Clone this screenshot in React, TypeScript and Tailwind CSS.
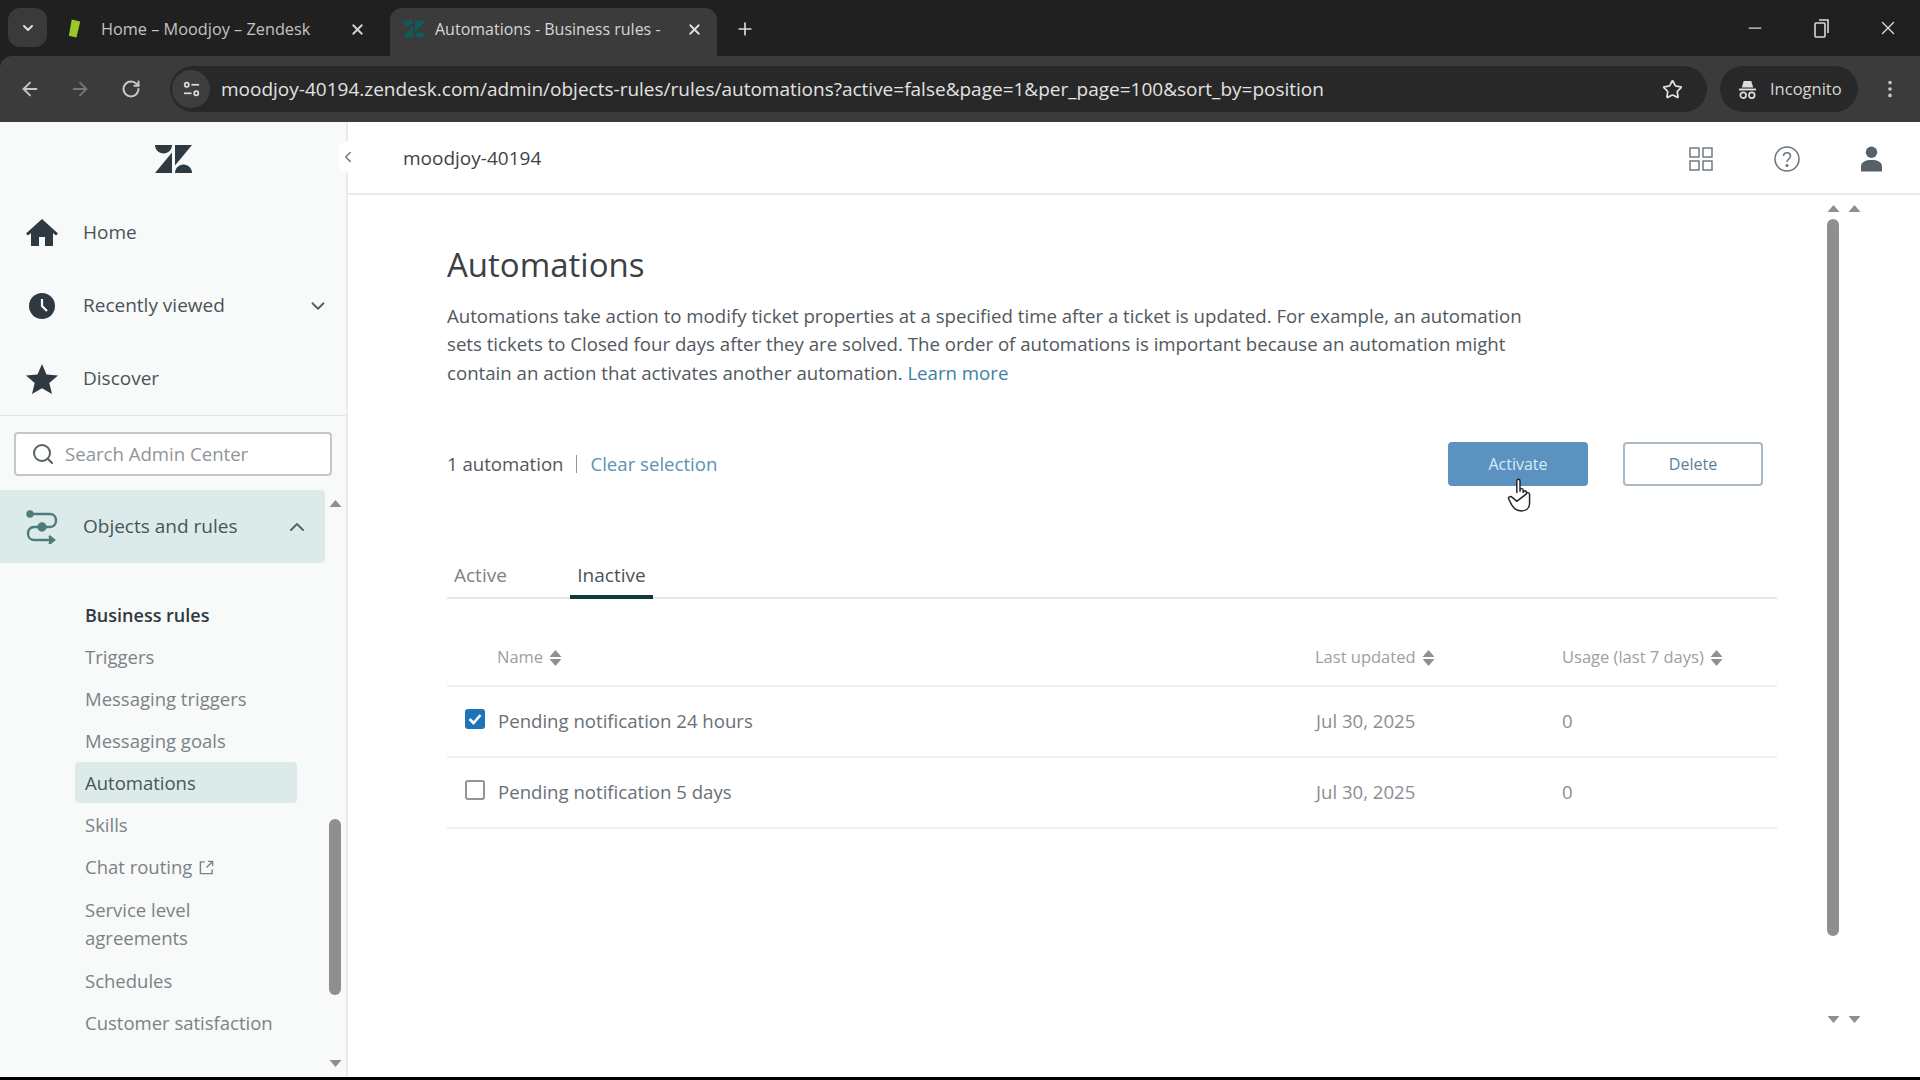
import {
  ArrowLeft,
  ArrowRight,
  ChevronDown,
  ChevronLeft,
  ChevronUp,
  EllipsisVertical,
  Minus,
  Plus,
  RotateCw,
  Search,
  Star,
  X,
} from 'lucide-react';

function ZendeskLogo({ className, fill }: { className?: string; fill: string }) {
  return (
    <svg viewBox="0 0 37 28" className={className} fill={fill}>
      <path d="M17 7.5V28H0L17 7.5Z" />
      <path d="M17 0C17 4.7 13.2 8.5 8.5 8.5S0 4.7 0 0H17Z" />
      <path d="M20 28C20 23.3 23.8 19.5 28.5 19.5S37 23.3 37 28H20Z" />
      <path d="M20 20.5V0H37L20 20.5Z" />
    </svg>
  );
}

function Triangle({ up, className }: { up?: boolean; className?: string }) {
  return (
    <svg viewBox="0 0 12 7" className={className} fill="currentColor">
      {up ? <path d="M6 0L12 7H0L6 0Z" /> : <path d="M6 7L0 0H12L6 7Z" />}
    </svg>
  );
}

function SortIcon() {
  return (
    <svg viewBox="0 0 12 16" className="w-[13px] h-[16px] text-[#8c9196]" fill="currentColor">
      <path d="M6 0L12 7H0L6 0Z" />
      <path d="M6 16L0 9H12L6 16Z" />
    </svg>
  );
}

function BrowserTabs() {
  return (
    <div className="h-14 bg-[#202020] flex items-end pl-2 text-[#c9c9c9] shrink-0">
      <div className="w-[39px] h-[39px] mb-[9px] rounded-xl bg-[#3a3a3a] flex items-center justify-center">
        <ChevronDown size={16} strokeWidth={3} className="text-[#dddddd]" />
      </div>
      <div className="w-[343px] h-12 flex items-center pl-[19px] pr-[24px] pb-[6px]">
        <svg viewBox="0 0 20 22" className="w-[19px] h-[22px] shrink-0">
          <path d="M6 1L15 3L11 20L3 18Z" fill="#9bc72b" />
        </svg>
        <span className="ml-4 text-[16.3px] text-[#c4c4c4] whitespace-nowrap flex-1">Home – Moodjoy – Zendesk</span>
        <X size={17} strokeWidth={2.5} className="text-[#d6d6d6]" />
      </div>
      <div className="w-[327px] h-12 bg-[#3b3b3b] rounded-t-xl flex items-center pl-[13px] pr-[14px] pb-[6px]">
        <ZendeskLogo className="w-[22px] h-[18px] shrink-0" fill="#0d5c58" />
        <span className="ml-[10px] text-[16px] text-[#d6d6d6] whitespace-nowrap">Automations - Business rules -</span>
        <span className="flex-1" />
        <X size={17} strokeWidth={2.5} className="text-[#e0e0e0]" />
      </div>
      <div className="ml-[18px] mb-[17px]">
        <Plus size={20} strokeWidth={2} className="text-[#dcdcdc]" />
      </div>
      <div className="flex-1" />
      <div className="flex items-center gap-[47px] pr-[21px] mb-[17px] text-[#d8d8d8]">
        <Minus size={20} strokeWidth={1.5} />
        <svg viewBox="0 0 16 20" className="w-[16px] h-[20px] ml-[2px]" fill="none" stroke="currentColor" strokeWidth="1.6">
          <rect x="1" y="5" width="10" height="14" rx="1" />
          <path d="M5 2H14V15" />
        </svg>
        <X size={22} strokeWidth={1.5} />
      </div>
    </div>
  );
}

function BrowserToolbar() {
  return (
    <div className="h-[66px] bg-[#3b3b3b] rounded-tl-xl flex items-center shrink-0 text-[#d0d0d0]">
      <div className="w-[170px] flex items-center pl-[19px] gap-[28px]">
        <ArrowLeft size={22} className="text-[#c8c8c8]" />
        <ArrowRight size={22} className="text-[#777777]" />
        <RotateCw size={20} strokeWidth={2.4} className="text-[#c8c8c8] ml-[2px]" />
      </div>
      <div className="w-[1537px] h-[46px] rounded-full bg-[#282828] flex items-center">
        <div className="w-[38px] h-[38px] ml-[2px] rounded-full bg-[#3e3e3e] flex items-center justify-center">
          <svg viewBox="0 0 20 20" className="w-[19px] h-[19px]" fill="none" stroke="#dddddd" strokeWidth="1.8">
            <circle cx="5" cy="5" r="2.2" />
            <path d="M10 5H18" />
            <path d="M2 14H10" />
            <circle cx="15" cy="14" r="2.2" />
          </svg>
        </div>
        <span className="ml-[11px] text-[19px] text-[#e2e2e2] whitespace-nowrap flex-1">
          moodjoy-40194.zendesk.com/admin/objects-rules/rules/automations?active=false&amp;page=1&amp;per_page=100&amp;sort_by=position
        </span>
        <Star size={21} strokeWidth={2} className="text-[#dedede] mr-[24px]" />
      </div>
      <div className="w-[138px] h-[46px] ml-[13px] rounded-full bg-[#282828] flex items-center pl-[18px]">
        <svg viewBox="0 0 20 22" className="w-[19px] h-[21px]" fill="#dcdcdc">
          <path d="M6 2H14L16 9H4Z" />
          <rect x="1" y="10" width="18" height="2" />
          <circle cx="5.5" cy="17" r="3" fill="none" stroke="#dcdcdc" strokeWidth="1.8" />
          <circle cx="14.5" cy="17" r="3" fill="none" stroke="#dcdcdc" strokeWidth="1.8" />
        </svg>
        <span className="ml-[13px] text-[16.5px] text-[#d6d6d6]">Incognito</span>
      </div>
      <EllipsisVertical size={22} className="ml-[21px] text-[#c8c8c8]" />
    </div>
  );
}

function NavRow({ icon, label, chevron }: { icon: React.ReactNode; label: string; chevron?: boolean }) {
  return (
    <div className="h-[73px] flex items-center relative">
      <div className="w-[83px] flex justify-center">{icon}</div>
      <span className="text-[19px] font-medium text-[#4a5358]">{label}</span>
      {chevron && <ChevronDown size={22} className="absolute left-[307px] text-[#555f64]" />}
    </div>
  );
}

const subItems = ['Triggers', 'Messaging triggers', 'Messaging goals'];

function Sidebar() {
  return (
    <aside className="w-[348px] shrink-0 bg-[#f8f9f9] border-r-2 border-[#e9ebed] flex flex-col relative">
      <div className="h-[74px] flex items-center justify-center">
        <ZendeskLogo className="w-[37px] h-[28px]" fill="#2f3941" />
      </div>
      <NavRow
        label="Home"
        icon={
          <svg viewBox="0 0 32 28" className="w-[32px] h-[28px]" fill="#2f3941">
            <path d="M16 0L32 14.5L30 16.5L27 14V27H19V18H13V27H5V14L2 16.5L0 14.5Z" />
          </svg>
        }
      />
      <NavRow
        label="Recently viewed"
        chevron
        icon={
          <svg viewBox="0 0 26 26" className="w-[26px] h-[26px]">
            <circle cx="13" cy="13" r="13" fill="#2f3941" />
            <path d="M13 6V13L18 18" fill="none" stroke="#f8f9f9" strokeWidth="2.2" />
          </svg>
        }
      />
      <NavRow
        label="Discover"
        icon={
          <svg viewBox="0 0 32 30" className="w-[32px] h-[30px]" fill="#2f3941">
            <path d="M16 0L20.5 10.5L32 11.5L23.3 19L26 30L16 24.2L6 30L8.7 19L0 11.5L11.5 10.5Z" />
          </svg>
        }
      />
      <div className="border-t border-[#e3e5e7] px-[14px] pt-[16px] pb-[14px]">
        <div className="h-[44px] rounded border-2 border-[#c4c7ca] bg-white flex items-center pl-[15px]">
          <Search size={24} strokeWidth={2} className="text-[#555f64]" />
          <span className="ml-[10px] text-[18.6px] text-[#8f9599]">Search Admin Center</span>
        </div>
      </div>
      <div className="flex-1 flex min-h-0">
        <div className="w-[325px] shrink-0">
          <div className="h-[73px] bg-[#dcebea] rounded-r flex items-center relative">
            <div className="w-[83px] flex justify-center">
              <svg viewBox="0 0 32 34" className="w-[32px] h-[34px]" fill="none" stroke="#4e7c7a" strokeWidth="2.4">
                <circle cx="4" cy="4" r="2.5" fill="#4e7c7a" />
                <path d="M6 4H24C32 4 32 17 24 17H8C0 17 0 30 8 30H27" />
                <path d="M23 26L28 30L23 34" fill="#4e7c7a" />
                <circle cx="16" cy="17" r="3.5" fill="#4e7c7a" />
              </svg>
            </div>
            <span className="text-[19px] font-medium text-[#44575a]">Objects and rules</span>
            <ChevronUp size={24} className="absolute left-[285px] text-[#4e6a6c]" />
          </div>
          <div className="pl-[75px] pr-[28px] pt-[32px]">
            <div className="h-[41px] pl-[10px] flex items-center text-[18px] font-semibold text-[#2f3941]">
              Business rules
            </div>
            {subItems.map((s) => (
              <div key={s} className="h-[42px] pl-[10px] flex items-center text-[18.5px] text-[#7b8287]">
                {s}
              </div>
            ))}
            <div className="h-[41px] pl-[10px] rounded flex items-center text-[18.5px] text-[#46575c] bg-[#dcebea]">
              Automations
            </div>
            <div className="h-[43px] pl-[10px] flex items-center text-[18.5px] text-[#7b8287]">Skills</div>
            <div className="h-[42px] pl-[10px] flex items-center text-[18.5px] text-[#7b8287]">
              Chat routing
              <svg viewBox="0 0 16 16" className="w-[15px] h-[15px] ml-[7px]" fill="none" stroke="#7b8287" strokeWidth="1.5">
                <path d="M6 2H1.5V14.5H14V10" />
                <path d="M8 8L14.5 1.5M9.5 1.5H14.5V6.5" />
              </svg>
            </div>
            <div className="py-[8px] pl-[10px] text-[18.5px] leading-[28px] text-[#7b8287]">
              Service level
              <br />
              agreements
            </div>
            <div className="h-[42px] pl-[10px] flex items-center text-[18.5px] text-[#7b8287]">Schedules</div>
            <div className="h-[42px] pl-[10px] flex items-center text-[18.5px] text-[#7b8287] whitespace-nowrap">
              Customer satisfaction
            </div>
          </div>
        </div>
        <div className="flex-1 flex flex-col items-center pt-[10px] pb-[10px] pr-[1px] text-[#8f8f8f]">
          <Triangle up className="w-[13px] h-[7px]" />
          <div className="w-[12px] h-[176px] mt-[312px] rounded-md bg-[#8f8f8f]" />
          <div className="flex-1" />
          <Triangle className="w-[13px] h-[7px]" />
        </div>
      </div>
      <div className="absolute left-[338px] top-[19px] w-[20px] h-[32px] bg-white rounded-full flex items-center justify-center">
        <ChevronLeft size={18} strokeWidth={1.6} className="text-[#5f686d]" />
      </div>
    </aside>
  );
}

function TopBar() {
  return (
    <div className="h-[73px] border-b-2 border-[#e9ebed] flex items-center pl-[55px] pt-[2px] shrink-0">
      <span className="text-[19px] font-medium text-[#3b4449] flex-1">moodjoy-40194</span>
      <div className="flex items-center text-[#68737a]">
        <svg viewBox="0 0 24 24" className="w-[24px] h-[24px]" fill="none" stroke="currentColor" strokeWidth="1.4">
          <rect x="1" y="1" width="9" height="9" />
          <rect x="14" y="1" width="9" height="9" />
          <rect x="1" y="14" width="9" height="9" />
          <rect x="14" y="14" width="9" height="9" />
        </svg>
        <svg viewBox="0 0 26 26" className="w-[26px] h-[26px] ml-[61px]" fill="none" stroke="currentColor" strokeWidth="1.5">
          <circle cx="13" cy="13" r="12" />
          <path d="M9.5 10C9.5 5.5 16.5 5.5 16.5 10C16.5 13 13 13 13 16" />
          <circle cx="13" cy="19.5" r="0.8" fill="currentColor" />
        </svg>
        <svg viewBox="0 0 22 26" className="w-[21px] h-[26px] ml-[61px] mr-[38px]" fill="#56616a">
          <circle cx="11" cy="6" r="6" />
          <path d="M0 26V21C0 16 5 14 11 14S22 16 22 21V26Z" />
        </svg>
      </div>
    </div>
  );
}

function Row({ checked, name, date }: { checked?: boolean; name: string; date: string }) {
  return (
    <div className="h-[71px] pb-[2px] border-b-2 border-[#eff0f1] flex items-center text-[18.6px] text-[#697077]">
      <div className="w-[51px] pl-[18px] shrink-0 -mt-[3px]">
        {checked ? (
          <div className="w-[20px] h-[20px] rounded-[3px] bg-[#1f73b7] flex items-center justify-center">
            <svg viewBox="0 0 14 12" className="w-[14px] h-[12px]" fill="none" stroke="white" strokeWidth="2.6">
              <path d="M1.5 6L5.5 10L12.5 2" />
            </svg>
          </div>
        ) : (
          <div className="w-[20px] h-[20px] rounded-[3px] border-2 border-[#8f9599] bg-white" />
        )}
      </div>
      <span className="w-[818px] shrink-0">{name}</span>
      <span className="w-[246px] shrink-0 text-[#8a8f94]">{date}</span>
      <span className="text-[#8a8f94]">0</span>
    </div>
  );
}

function Content() {
  return (
    <div className="flex-1 flex min-h-0 bg-white">
      <div className="flex-1 pl-[99px] pr-[45px] pt-[44px]">
        <h1 className="text-[33px] leading-[52px] text-[#3a4045]">Automations</h1>
        <p className="mt-[11px] text-[18.65px] leading-[28.4px] text-[#51585e] whitespace-nowrap">
          Automations take action to modify ticket properties at a specified time after a ticket is updated. For example, an automation
          <br />
          sets tickets to Closed four days after they are solved. The order of automations is important because an automation might
          <br />
          contain an action that activates another automation. <span className="text-[#3f7fa6]">Learn more</span>
        </p>
        <div className="mt-[55px] flex items-center h-[44px]">
          <span className="text-[18.6px] text-[#51585e]">1 automation</span>
          <span className="mx-[13px] w-px h-[18px] bg-[#8f9599]" />
          <span className="text-[18.6px] text-[#5a92b5]">Clear selection</span>
          <div className="flex-1" />
          <div className="relative w-[140px] h-[44px] rounded bg-[#5b92c0] flex items-center justify-center text-[16px] text-[#d5eaf8]">
            Activate
            <svg viewBox="0 0 24 32" className="absolute left-[59px] top-[36px] w-[26px] h-[34px]" fill="white" stroke="#222222" strokeWidth="1.4">
              <path d="M9 14V3C9 0.5 12 0.5 12 3V13M12 13V11.5C12 9.5 15 9.5 15 11.5V14M15 13.5C15 11.5 18 11.5 18 13.5V15M18 15C18 13 21 13.5 21 15.5V24C21 28 18 31 13 31C8 31 6 28 4 25L1.5 20C0.5 18 3 16.5 5 18.5L9 22Z" />
            </svg>
          </div>
          <div className="ml-[35px] mr-[14px] w-[140px] h-[44px] rounded border-2 border-[#a9bac7] flex items-center justify-center text-[16px] text-[#5f7c96]">
            Delete
          </div>
        </div>
        <div className="mt-[58px] h-[55px] border-b-2 border-[#e4e6e8] flex items-end">
          <div className="w-[123px] pl-[7px] h-full flex items-end pb-[8px] text-[19px] text-[#7b8287]">Active</div>
          <div className="w-[83px] -mb-[2px] h-[57px] border-b-4 border-[#12393a] flex items-end justify-center pb-[6px] text-[19px] font-medium text-[#4a5358]">
            Inactive
          </div>
        </div>
        <div className="h-[88px] border-b-2 border-[#eff0f1] flex items-end pb-[15px] text-[16.5px] font-medium text-[#9a9fa3]">
          <span className="w-[868px] pl-[50px] shrink-0 flex items-center gap-[6px]">
            Name <SortIcon />
          </span>
          <span className="w-[247px] shrink-0 flex items-center gap-[6px]">
            Last updated <SortIcon />
          </span>
          <span className="flex items-center gap-[6px]">
            Usage (last 7 days) <SortIcon />
          </span>
        </div>
        <Row checked name="Pending notification 24 hours" date="Jul 30, 2025" />
        <Row name="Pending notification 5 days" date="Jul 30, 2025" />
      </div>
      <div className="w-[22px] shrink-0 flex flex-col items-center pt-[10px] text-[#8f8f8f]">
        <Triangle up className="w-[13px] h-[7px]" />
        <div className="w-[12px] h-[717px] mt-[7px] rounded-md bg-[#8f8f8f]" />
        <Triangle className="w-[13px] h-[7px] mt-[80px]" />
      </div>
      <div className="w-[76px] shrink-0 flex flex-col pt-[10px] pl-[4px] text-[#8f8f8f]">
        <Triangle up className="w-[13px] h-[7px]" />
        <Triangle className="w-[13px] h-[7px] mt-[804px]" />
      </div>
    </div>
  );
}

export default function App() {
  return (
    <div className="w-[1920px] h-[1080px] bg-[#202020] flex flex-col overflow-hidden font-['Open_Sans',sans-serif]">
      <BrowserTabs />
      <BrowserToolbar />
      <div className="flex-1 flex min-h-0 bg-white">
        <Sidebar />
        <div className="flex-1 flex flex-col min-w-0">
          <TopBar />
          <Content />
        </div>
      </div>
      <div className="h-[3px] bg-black shrink-0" />
    </div>
  );
}
